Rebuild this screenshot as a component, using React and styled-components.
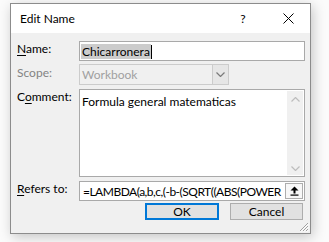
import React from "react";
import styled, { createGlobalStyle } from "styled-components";

const Global = createGlobalStyle`
  html, body { margin: 0; padding: 0; background: #fbfbfb; }
  body { font-family: Lato, "Noto Sans", sans-serif; font-size: 12px; color: #000; }
`;

const Stage = styled.div`
  padding: 3px 0 0 10px;
  width: 329px;
  height: 242px;
  box-sizing: border-box;
  overflow: hidden;
`;

const Dialog = styled.div`
  position: relative;
  width: 301px;
  height: 231px;
  box-sizing: border-box;
  border: 1px solid #8c8c8c;
  background: #f0f0f0;
  box-shadow: 2px 3px 12px rgba(0, 0, 0, 0.22);
  display: flex;
  flex-direction: column;
`;

const TitleBar = styled.div`
  height: 29px;
  flex: none;
  background: #fff;
  display: flex;
  align-items: center;
  padding-left: 9px;
`;

const Title = styled.div`
  flex: 1;
  font-size: 12px;
  color: #000;
`;

const HelpGlyph = styled.div`
  width: 30px;
  margin-right: 8px;
  text-align: center;
  font-size: 12px;
`;

const CloseGlyph = styled.div`
  width: 44px;
  display: flex;
  justify-content: center;
  align-items: center;
`;

const Body = styled.div`
  flex: 1;
  padding: 8px 5px 0 6px;
  display: flex;
  flex-direction: column;
`;

const Row = styled.div`
  display: grid;
  grid-template-columns: 62px 1fr;
  margin-top: ${(p) => p.$gap || 0}px;
  height: ${(p) => p.$h}px;
`;

const Label = styled.div`
  line-height: 16px;
  margin-top: ${(p) => p.$dy || 0}px;
  color: ${(p) => (p.$disabled ? "#838383" : "#000")};
  u { text-decoration: underline; text-underline-offset: 2px; }
`;

const TextBox = styled.div`
  position: relative;
  box-sizing: border-box;
  height: ${(p) => p.$h}px;
  width: ${(p) => p.$w || 226}px;
  border: 1px solid ${(p) => (p.$disabled ? "#cccccc" : "#a9a9a9")};
  background: ${(p) => (p.$disabled ? "#f0f0f0" : "#fff")};
  display: flex;
  align-items: ${(p) => (p.$top ? "flex-start" : "center")};
  overflow: hidden;
`;

const Value = styled.span`
  padding-left: ${(p) => p.$pl || 1}px;
  padding-top: ${(p) => p.$pt || 0}px;
  line-height: 15px;
  white-space: nowrap;
  letter-spacing: ${(p) => p.$ls || 0}px;
  color: ${(p) => (p.$disabled ? "#a0a0a0" : "#000")};
`;

const Selected = styled.span`
  background: #cccccc;
  padding: 0 1px;
`;

const Caret = styled.span`
  display: inline-block;
  width: 1px;
  height: 14px;
  background: #000;
  vertical-align: -3px;
`;

const DropButton = styled.div`
  margin-left: auto;
  width: 16px;
  height: 100%;
  box-sizing: border-box;
  border-left: 1px solid #cccccc;
  background: #e6e6e6;
  display: flex;
  align-items: center;
  justify-content: center;
`;

const ScrollBar = styled.div`
  position: absolute;
  right: 1px;
  top: 1px;
  bottom: 1px;
  width: 16px;
  background: #f0f0f0;
  display: flex;
  flex-direction: column;
  justify-content: space-between;
  align-items: center;
  padding: 6px 0 4px;
  box-sizing: border-box;
`;

const RefButton = styled.div`
  position: absolute;
  right: 1px;
  top: 1px;
  width: 18px;
  height: 16px;
  box-sizing: border-box;
  border: 1px solid #adadad;
  background: #f7f7f7;
  display: flex;
  align-items: center;
  justify-content: center;
`;

const Buttons = styled.div`
  display: flex;
  justify-content: flex-end;
  gap: 11px;
  margin-top: 2px;
  padding-right: 2px;
`;

const Button = styled.div`
  box-sizing: border-box;
  width: ${(p) => p.$w}px;
  height: 17px;
  background: #e1e1e1;
  border: ${(p) => (p.$default ? "2px solid #0078d7" : "1px solid #adadad")};
  display: flex;
  align-items: center;
  justify-content: center;
  line-height: 14px;
`;

const Grip = styled.svg`
  position: absolute;
  right: 1px;
  bottom: 1px;
`;

const Chevron = ({ up, color = "#bdbdbd" }) => (
  <svg width="9" height="5" viewBox="0 0 9 5">
    <polyline
      points={up ? "0.5,4.5 4.5,0.5 8.5,4.5" : "0.5,0.5 4.5,4.5 8.5,0.5"}
      fill="none"
      stroke={color}
      strokeWidth="1.2"
    />
  </svg>
);

export default function App() {
  return (
    <Stage>
      <Global />
      <Dialog>
        <TitleBar>
          <Title>Edit Name</Title>
          <HelpGlyph>?</HelpGlyph>
          <CloseGlyph>
            <svg width="11" height="11" viewBox="0 0 11 11">
              <path d="M0.5 0.5 L10.5 10.5 M10.5 0.5 L0.5 10.5" stroke="#000" strokeWidth="1" />
            </svg>
          </CloseGlyph>
        </TitleBar>
        <Body>
          <Row $h={20}>
            <Label>
              <u>N</u>ame:
            </Label>
            <TextBox $h={20}>
              <Value $pl={1}>
                <Selected>Chicarronera</Selected>
                <Caret />
              </Value>
            </TextBox>
          </Row>
          <Row $h={21} $gap={3}>
            <Label $disabled $dy={1}>Scope:</Label>
            <TextBox $h={21} $w={150} $disabled>
              <Value $pl={2} $disabled>Workbook</Value>
              <DropButton>
                <Chevron color="#7a7a7a" />
              </DropButton>
            </TextBox>
          </Row>
          <Row $h={88} $gap={4}>
            <Label>
              C<u>o</u>mment:
            </Label>
            <TextBox $h={88} $top>
              <Value $pl={2} $pt={4}>Formula general matematicas</Value>
              <ScrollBar>
                <Chevron up />
                <Chevron />
              </ScrollBar>
            </TextBox>
          </Row>
          <Row $h={20} $gap={4}>
            <Label>
              <u>R</u>efers to:
            </Label>
            <TextBox $h={20}>
              <Value $pl={3} $ls={-0.5}>=LAMBDA(a,b,c,(-b-(SQRT((ABS(POWER</Value>
              <RefButton>
                <svg width="9" height="10" viewBox="0 0 9 10">
                  <path d="M4.5 0.5 L8.5 4.5 L5.5 4.5 L5.5 7.5 L3.5 7.5 L3.5 4.5 L0.5 4.5 Z" fill="#000" />
                  <rect x="0.5" y="8.5" width="8" height="1.2" fill="#000" />
                </svg>
              </RefButton>
            </TextBox>
          </Row>
          <Buttons>
            <Button $w={74} $default>OK</Button>
            <Button $w={73}>Cancel</Button>
          </Buttons>
        </Body>
        <Grip width="10" height="10" viewBox="0 0 10 10">
          <path d="M9 1 L1 9 M9 4 L4 9 M9 7 L7 9" stroke="#a0a0a0" strokeWidth="1" />
          <path d="M10 1.5 L1.5 10 M10 4.5 L4.5 10 M10 7.5 L7.5 10" stroke="#ffffff" strokeWidth="1" />
        </Grip>
      </Dialog>
    </Stage>
  );
}
